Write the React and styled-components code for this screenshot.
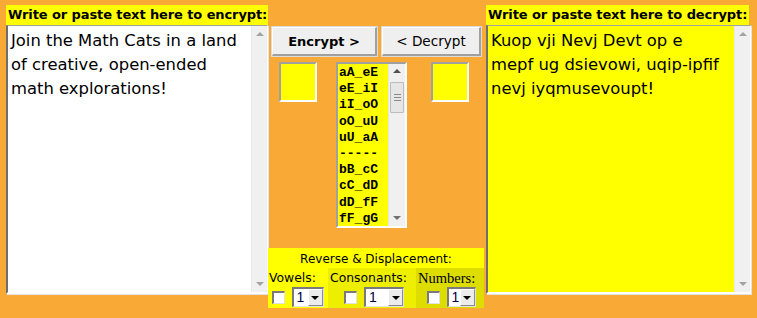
import React from "react";
import styled, { createGlobalStyle } from "styled-components";

const ORANGE = "#f9a936";
const YELLOW = "#ffff00";
const COMIC = `"Comic Sans MS", "DejaVu Sans", sans-serif`;

const Global = createGlobalStyle`
  html, body { margin: 0; padding: 0; background: ${ORANGE}; }
  body { font-family: ${COMIC}; }
`;

const Page = styled.div`
  display: flex;
  align-items: flex-start;
  padding: 5px 0 0 6px;
  width: 757px;
  height: 318px;
  box-sizing: border-box;
  background: ${ORANGE};
  overflow: hidden;
`;

const Column = styled.div`
  display: flex;
  flex-direction: column;
  width: ${(p) => p.$w}px;
  margin-left: ${(p) => p.$ml || 0}px;
`;

const Label = styled.div`
  height: 20px;
  width: ${(p) => p.$w}px;
  background: ${YELLOW};
  font-family: ${COMIC};
  font-weight: bold;
  font-size: 13px;
  letter-spacing: -0.1px;
  line-height: 20px;
  color: #000;
  padding-left: 2px;
  box-sizing: border-box;
  white-space: nowrap;
`;

const TextBox = styled.div`
  display: flex;
  height: 269px;
  box-sizing: border-box;
  background: ${(p) => p.$bg};
  border-style: solid;
  border-width: 1px 1px 2px 2px;
  border-color: #a0a0a0 #ffffff #ffffff #6e6e6e;
  box-shadow: 1px 1px 0 #e3e3e3;
`;

const TextArea = styled.textarea`
  flex: 1;
  border: none;
  outline: none;
  resize: none;
  background: transparent;
  margin: 0;
  padding: 3px 3px;
  font-family: ${COMIC};
  font-size: 16.4px;
  line-height: 24px;
  color: #000;
  overflow: hidden;
  white-space: pre;
`;

const Track = styled.div`
  width: ${(p) => p.$w || 16}px;
  flex: none;
  background: #f0f0f0;
  border-left: 1px solid #e8e8e8;
  display: flex;
  flex-direction: column;
  align-items: center;
  box-sizing: border-box;
  padding: ${(p) => p.$pad || "6px 0 6px"};
`;

const Arrow = styled.span`
  width: 0;
  height: 0;
  border-left: 4px solid transparent;
  border-right: 4px solid transparent;
  ${(p) =>
    p.$down
      ? `border-top: 4px solid ${p.$c || "#a3a3a3"}; margin-top: auto;`
      : `border-bottom: 4px solid ${p.$c || "#a3a3a3"};`}
`;

const Thumb = styled.div`
  width: 14px;
  height: 31px;
  margin-top: 9px;
  box-sizing: border-box;
  background: #e6e6e6;
  border: 1px solid #bcbcbc;
  border-radius: 1px;
  display: flex;
  flex-direction: column;
  justify-content: center;
  align-items: center;
  gap: 2px;
`;

const Grip = styled.span`
  width: 7px;
  height: 1px;
  background: #8a8a8a;
`;

const ButtonRow = styled.div`
  display: flex;
  gap: 5px;
  padding: 22px 0 0 4px;
`;

const Button = styled.button`
  width: ${(p) => p.$w}px;
  height: 29px;
  margin: 0;
  padding: 0;
  box-sizing: border-box;
  background: #efefef;
  border-style: solid;
  border-width: 1px 2px 2px 1px;
  border-color: #ffffff #a0a0a0 #a0a0a0 #ffffff;
  box-shadow: 0 0 0 1px #dcdcdc;
  font-family: ${COMIC};
  font-size: ${(p) => (p.$bold ? "13px" : "13.6px")};
  font-weight: ${(p) => (p.$bold ? "bold" : "normal")};
  color: #000;
  cursor: pointer;
`;

const ToolsRow = styled.div`
  display: flex;
  align-items: flex-start;
  margin-top: 6px;
  padding-left: 11px;
`;

const Swatch = styled.div`
  width: 38px;
  height: 40px;
  box-sizing: border-box;
  background: ${YELLOW};
  border-style: solid;
  border-width: 2px;
  border-color: #a0a0a0 #ffffff #ffffff #a0a0a0;
  margin-left: ${(p) => p.$ml || 0}px;
`;

const ListBox = styled.div`
  display: flex;
  width: 71px;
  height: 166px;
  box-sizing: border-box;
  margin-left: 19px;
  background: ${YELLOW};
  border-style: solid;
  border-width: 2px;
  border-color: #a0a0a0 #ffffff #ffffff #a0a0a0;
`;

const ListItems = styled.div`
  flex: 1;
  overflow: hidden;
  padding: 1px 0 0 1px;
`;

const ListItem = styled.div`
  font-family: "Liberation Mono", "DejaVu Sans Mono", monospace;
  font-weight: bold;
  font-size: 13px;
  line-height: 16.2px;
  color: #000;
  white-space: pre;
`;

const Panel = styled.div`
  width: 216px;
  margin-top: 20px;
  background: ${YELLOW};
  display: flex;
  flex-direction: column;
`;

const PanelTitle = styled.div`
  height: 20px;
  line-height: 23px;
  text-align: center;
  font-family: ${COMIC};
  font-size: 12px;
  color: #000;
`;

const Cells = styled.div`
  display: grid;
  grid-template-columns: 59px 88px 68px;
  padding-left: 1px;
`;

const Cell = styled.div`
  background: ${(p) => p.$bg};
  height: 40px;
  display: flex;
  flex-direction: column;
  padding-left: ${(p) => p.$pl || 0}px;
`;

const CellLabel = styled.div`
  height: 19px;
  line-height: 20px;
  font-family: ${(p) => (p.$serif ? `"Liberation Serif", serif` : COMIC)};
  font-size: ${(p) => (p.$serif ? "14.5px" : "12.4px")};
  color: #000;
  white-space: nowrap;
`;

const Controls = styled.div`
  display: flex;
  align-items: center;
  justify-content: center;
  gap: 7px;
  height: 20px;
  margin-left: ${(p) => p.$shift || 0}px;
`;

const Check = styled.input.attrs({ type: "checkbox" })`
  appearance: none;
  margin: 0;
  width: 13px;
  height: 13px;
  box-sizing: border-box;
  background: #fff;
  border-style: solid;
  border-width: 2px 1px 1px 2px;
  border-color: #7a7a7a #e3e3e3 #e3e3e3 #7a7a7a;
`;

const Select = styled.div`
  display: flex;
  width: ${(p) => p.$w}px;
  height: 20px;
  box-sizing: border-box;
  background: #fff;
  border-style: solid;
  border-width: 2px 1px 1px 2px;
  border-color: #7a7a7a #e3e3e3 #e3e3e3 #7a7a7a;
`;

const SelectValue = styled.span`
  flex: 1;
  font-family: "Liberation Sans", Arial, sans-serif;
  font-size: 14px;
  line-height: 17px;
  padding-left: 3px;
  color: #000040;
`;

const SelectButton = styled.span`
  width: 15px;
  flex: none;
  box-sizing: border-box;
  background: #ececec;
  border-style: solid;
  border-width: 1px;
  border-color: #ffffff #8a8a8a #8a8a8a #ffffff;
  display: flex;
  align-items: center;
  justify-content: center;
`;

const DropArrow = styled.span`
  width: 0;
  height: 0;
  border-left: 4px solid transparent;
  border-right: 4px solid transparent;
  border-top: 4px solid #000;
`;

const listItems = [
  "aA_eE", "eE_iI", "iI_oO", "oO_uU", "uU_aA", "-----",
  "bB_cC", "cC_dD", "dD_fF", "fF_gG",
];

function Scroll({ thumb }) {
  return (
    <Track $w={thumb ? 17 : 16} $pad={thumb ? "5px 0 6px" : "6px 0 6px"}>
      <Arrow $c={thumb ? "#505050" : "#a3a3a3"} />
      {thumb && (
        <Thumb>
          <Grip />
          <Grip />
          <Grip />
        </Thumb>
      )}
      <Arrow $down $c={thumb ? "#707070" : "#a3a3a3"} />
    </Track>
  );
}

function Dropdown({ w }) {
  return (
    <Select $w={w}>
      <SelectValue>1</SelectValue>
      <SelectButton>
        <DropArrow />
      </SelectButton>
    </Select>
  );
}

export default function App() {
  return (
    <>
      <Global />
      <Page>
        <Column $w={262}>
          <Label $w={262}>Write or paste text here to encrypt:</Label>
          <TextBox $bg="#ffffff">
            <TextArea
              readOnly
              defaultValue={"Join the Math Cats in a land\nof creative, open-ended\nmath explorations!"}
            />
            <Scroll />
          </TextBox>
        </Column>

        <Column $w={216}>
          <ButtonRow>
            <Button $w={105} $bold>
              Encrypt &gt;
            </Button>
            <Button $w={99}>&lt; Decrypt</Button>
          </ButtonRow>
          <ToolsRow>
            <Swatch />
            <ListBox>
              <ListItems>
                {listItems.map((t, i) => (
                  <ListItem key={i}>{t}</ListItem>
                ))}
              </ListItems>
              <Scroll thumb />
            </ListBox>
            <Swatch $ml={24} />
          </ToolsRow>
          <Panel>
            <PanelTitle>Reverse &amp; Displacement:</PanelTitle>
            <Cells>
              <Cell $bg="#ffff00">
                <CellLabel>Vowels:</CellLabel>
                <Controls $shift={-2}>
                  <Check />
                  <Dropdown w={32} />
                </Controls>
              </Cell>
              <Cell $bg="#eeee00" $pl={2}>
                <CellLabel>Consonants:</CellLabel>
                <Controls $shift={2}>
                  <Check />
                  <Dropdown w={40} />
                </Controls>
              </Cell>
              <Cell $bg="#dddd00" $pl={2}>
                <CellLabel $serif>Numbers:</CellLabel>
                <Controls>
                  <Check />
                  <Dropdown w={29} />
                </Controls>
              </Cell>
            </Cells>
          </Panel>
        </Column>

        <Column $w={265} $ml={2}>
          <Label $w={263}>Write or paste text here to decrypt:</Label>
          <TextBox $bg={YELLOW}>
            <TextArea
              readOnly
              defaultValue={"Kuop vji Nevj Devt op e\nmepf ug dsievowi, uqip-ipfif\nnevj iyqmusevoupt!"}
            />
            <Scroll />
          </TextBox>
        </Column>
      </Page>
    </>
  );
}
